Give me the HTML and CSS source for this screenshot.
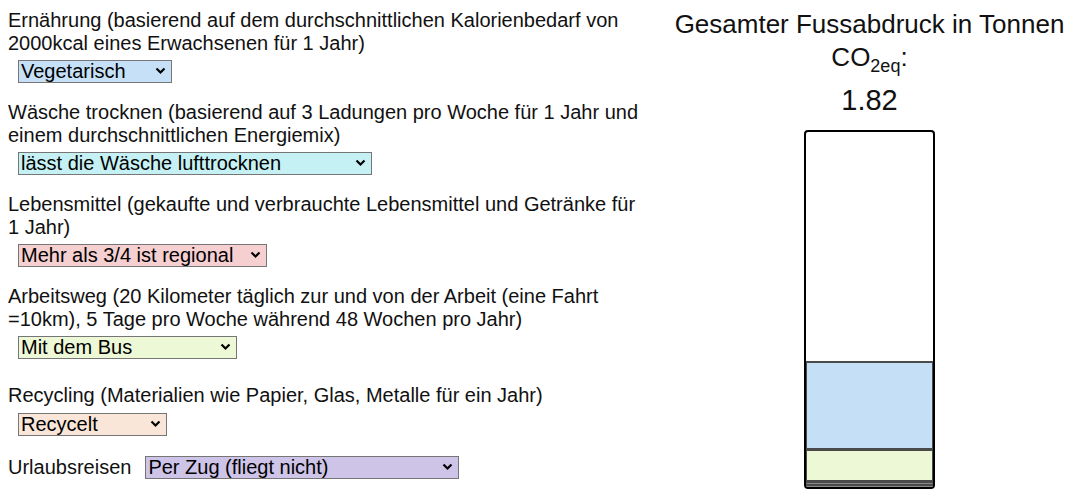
FILE: index.html
```html
<!DOCTYPE html>
<html lang="de">
<head>
<meta charset="utf-8">
<title>CO2 Fussabdruck</title>
<link rel="stylesheet" href="styles.css">
</head>
<body>
<div class="page">
  <div class="form">
    <div class="field">
      <div class="label">Ernährung (basierend auf dem durchschnittlichen Kalorienbedarf von 2000kcal eines Erwachsenen für 1 Jahr)</div>
      <span class="select-wrap"><select class="sel sel-diet"><option>Vegetarisch</option></select><svg class="chev" width="11" height="8" viewBox="0 0 11 8"><polyline points="1.5,1.5 5.5,5.5 9.5,1.5" fill="none" stroke="#000" stroke-width="2.2"/></svg></span>
    </div>
    <div class="field">
      <div class="label">Wäsche trocknen (basierend auf 3 Ladungen pro Woche für 1 Jahr und einem durchschnittlichen Energiemix)</div>
      <span class="select-wrap"><select class="sel sel-laundry"><option>lässt die Wäsche lufttrocknen</option></select><svg class="chev" width="11" height="8" viewBox="0 0 11 8"><polyline points="1.5,1.5 5.5,5.5 9.5,1.5" fill="none" stroke="#000" stroke-width="2.2"/></svg></span>
    </div>
    <div class="field">
      <div class="label">Lebensmittel (gekaufte und verbrauchte Lebensmittel und Getränke für 1 Jahr)</div>
      <span class="select-wrap"><select class="sel sel-food"><option>Mehr als 3/4 ist regional</option></select><svg class="chev" width="11" height="8" viewBox="0 0 11 8"><polyline points="1.5,1.5 5.5,5.5 9.5,1.5" fill="none" stroke="#000" stroke-width="2.2"/></svg></span>
    </div>
    <div class="field">
      <div class="label">Arbeitsweg (20 Kilometer täglich zur und von der Arbeit (eine Fahrt =10km), 5 Tage pro Woche während 48 Wochen pro Jahr)</div>
      <span class="select-wrap"><select class="sel sel-commute"><option>Mit dem Bus</option></select><svg class="chev" width="11" height="8" viewBox="0 0 11 8"><polyline points="1.5,1.5 5.5,5.5 9.5,1.5" fill="none" stroke="#000" stroke-width="2.2"/></svg></span>
    </div>
    <div class="field field-recycling">
      <div class="label">Recycling (Materialien wie Papier, Glas, Metalle für ein Jahr)</div>
      <span class="select-wrap"><select class="sel sel-recycling"><option>Recycelt</option></select><svg class="chev" width="11" height="8" viewBox="0 0 11 8"><polyline points="1.5,1.5 5.5,5.5 9.5,1.5" fill="none" stroke="#000" stroke-width="2.2"/></svg></span>
    </div>
    <div class="field field-inline">
      <span class="label-inline">Urlaubsreisen</span>
      <span class="select-wrap"><select class="sel sel-travel"><option>Per Zug (fliegt nicht)</option></select><svg class="chev" width="11" height="8" viewBox="0 0 11 8"><polyline points="1.5,1.5 5.5,5.5 9.5,1.5" fill="none" stroke="#000" stroke-width="2.2"/></svg></span>
    </div>
  </div>
  <div class="result">
    <div class="title">Gesamter Fussabdruck in Tonnen CO<sub>2eq</sub>:</div>
    <div class="total">1.82</div>
    <div class="bar">
      <div class="seg seg-blue" style="height:85px"></div>
      <div class="seg seg-green" style="height:29px"></div>
      <div class="seg seg-empty"></div>
      <div class="seg seg-empty"></div>
    </div>
  </div>
</div>
</body>
</html>
```
FILE: styles.css
```css
html, body {
  margin: 0;
  padding: 0;
  background: #fff;
}
body {
  padding: 8px;
  font-family: "Liberation Sans", Arial, sans-serif;
  color: #111;
}
.page {
  display: flex;
  align-items: flex-start;
}
.form {
  width: 632px;
  flex: none;
  font-size: 20px;
}
.field {
  margin-bottom: 17px;
}
.label {
  line-height: 22.5px;
  padding-top: 1px;
}
.select-wrap {
  position: relative;
  display: block;
  width: max-content;
  margin: 6px 0 0 10px;
}
.sel {
  display: block;
  appearance: none;
  -webkit-appearance: none;
  box-sizing: border-box;
  height: 23px;
  margin: 0;
  font-family: "Liberation Sans", Arial, sans-serif;
  font-size: 20px;
  line-height: 21px;
  color: #000;
  border: 1px solid #767676;
  border-radius: 0;
  padding: 0 20px 0 2px;
}
.chev {
  position: absolute;
  right: 6px;
  top: 7px;
  pointer-events: none;
}
.sel-diet { width: 154px; background-color: #c5e0f7; }
.sel-laundry { width: 354px; background-color: #c6f1f4; }
.sel-food { width: 249px; background-color: #f6cfd0; }
.sel-commute { width: 219px; background-color: #edf8d6; }
.sel-recycling { width: 149px; background-color: #fae6d9; }
.sel-travel { width: 314px; background-color: #cdc4e8; }
.field-recycling {
  padding-top: 7px;
}
.field-inline {
  display: flex;
  align-items: center;
  gap: 14px;
  margin-top: 20px;
}
.field-inline .select-wrap {
  margin: 0;
}
.result {
  flex: 1;
  min-width: 0;
  padding-left: 29px;
  display: flex;
  flex-direction: column;
  align-items: center;
  text-align: center;
  color: #111;
}
.title {
  font-size: 26px;
  line-height: 33px;
  width: 400px;
}
.title sub {
  font-size: 18px;
  line-height: 0;
}
.total {
  font-size: 29px;
  line-height: 34px;
  margin-top: 9px;
}
.bar {
  margin-top: 13px;
  width: 127px;
  height: 355px;
  border: 2px solid #000;
  border-radius: 4px;
  display: flex;
  flex-direction: column;
  justify-content: flex-end;
  overflow: hidden;
}
.seg {
  flex: none;
  border-style: solid;
  border-color: #4a4a4a;
  border-width: 2px 1px 1px;
}
.seg-blue { background: #c4dff6; }
.seg-green { background: #edf8d6; }
.seg-empty { height: 0; background: #777; border-bottom-color: #888; }
```
